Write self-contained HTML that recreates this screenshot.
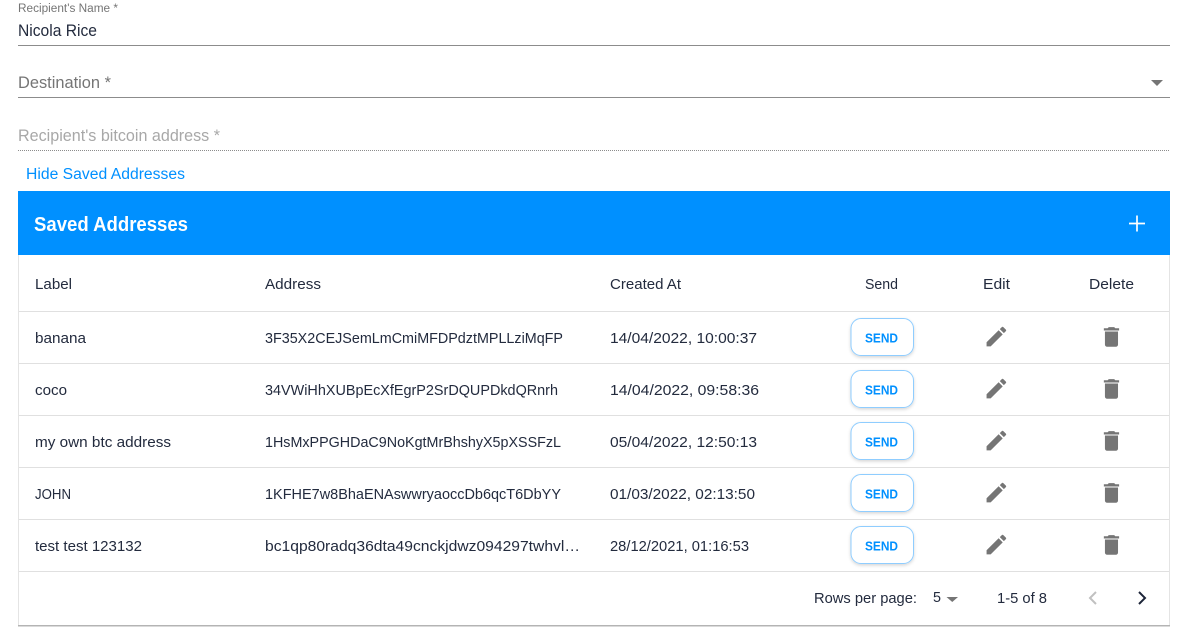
<!DOCTYPE html>
<html><head><meta charset="utf-8"><style>
html,body{margin:0;padding:0;background:#fff;width:1185px;height:643px;overflow:hidden}
svg{display:block}
text{font-family:"Liberation Sans",sans-serif;font-size:14.5px;fill:#232b3e}
</style></head><body>
<svg width="1185" height="643" viewBox="0 0 1185 643" xmlns="http://www.w3.org/2000/svg">
<defs>
<filter id="s" x="-20%" y="-20%" width="140%" height="150%"><feDropShadow dx="0" dy="1.5" stdDeviation="1.5" flood-color="#000" flood-opacity=".16"/></filter>
<g id="row">
<rect x="851" y="318.5" width="62.5" height="37" rx="10" fill="#fff" stroke="#8fcdff" filter="url(#s)"/>
<text x="865" y="342.5" style="font-size:12.5px;fill:#0090ff;font-weight:bold" textLength="33" lengthAdjust="spacingAndGlyphs">SEND</text>
<path transform="translate(983.3 323.5) scale(1.09)" fill="#757575" d="M3 17.25V21h3.75L17.81 9.94l-3.75-3.75L3 17.25zM20.71 7.04c.39-.39.39-1.02 0-1.41l-2.34-2.34a.9959.9959 0 0 0-1.41 0l-1.83 1.83 3.75 3.75 1.83-1.83z"/>
<path transform="translate(1098.4 323.9) scale(1.09)" fill="#757575" d="M6 19c0 1.1.9 2 2 2h8c1.1 0 2-.9 2-2V7H6v12zM19 4h-3.5l-1-1h-5l-1 1H5v2h14V4z"/>
</g>
</defs>
<text x="18" y="12" style="font-size:11.5px;fill:#757575" textLength="100" lengthAdjust="spacingAndGlyphs">Recipient's Name *</text>
<text x="18" y="36" style="font-size:16.5px" textLength="79" lengthAdjust="spacingAndGlyphs">Nicola Rice</text>
<rect x="18" y="45" width="1152" height="1" fill="#8c8c8c"/>
<text x="18" y="88" style="font-size:16.5px;fill:#757575" textLength="93" lengthAdjust="spacingAndGlyphs">Destination *</text>
<rect x="18" y="97" width="1152" height="1" fill="#8c8c8c"/>
<path d="M1151 80h12l-6 6z" fill="#757575"/>
<text x="18" y="141" style="font-size:16.5px;fill:#a8a8a8" textLength="202" lengthAdjust="spacingAndGlyphs">Recipient's bitcoin address *</text>
<line x1="18" y1="150.5" x2="1170" y2="150.5" stroke="#8c8c8c" stroke-dasharray="1 1"/>
<text x="26" y="179" style="font-size:15.5px;fill:#0090ff" textLength="159" lengthAdjust="spacingAndGlyphs">Hide Saved Addresses</text>

<rect x="18" y="255" width="1152" height="371" fill="#e4e4e4"/>
<rect x="18" y="625" width="1152" height="1.5" fill="#b4b4b4"/>
<rect x="19" y="255" width="1150" height="370" fill="#fff"/>
<rect x="18" y="191" width="1152" height="64" fill="#0090ff"/>
<text x="34" y="231" style="font-size:20px;fill:#fff;font-weight:bold" textLength="154" lengthAdjust="spacingAndGlyphs">Saved Addresses</text>
<path d="M1129 223.5h16M1137 215.5v16" stroke="#fff" stroke-width="1.7" fill="none"/>

<text x="35" y="289" textLength="37" lengthAdjust="spacingAndGlyphs">Label</text>
<text x="265" y="289" textLength="56" lengthAdjust="spacingAndGlyphs">Address</text>
<text x="610" y="289" textLength="71" lengthAdjust="spacingAndGlyphs">Created At</text>
<text x="865" y="289" textLength="33" lengthAdjust="spacingAndGlyphs">Send</text>
<text x="983" y="289" textLength="27" lengthAdjust="spacingAndGlyphs">Edit</text>
<text x="1089" y="289" textLength="45" lengthAdjust="spacingAndGlyphs">Delete</text>

<g fill="#e0e0e0">
<rect x="19" y="311" width="1150" height="1"/>
<rect x="19" y="363" width="1150" height="1"/>
<rect x="19" y="415" width="1150" height="1"/>
<rect x="19" y="467" width="1150" height="1"/>
<rect x="19" y="519" width="1150" height="1"/>
<rect x="19" y="571" width="1150" height="1"/>
</g>

<text x="35" y="343" textLength="51" lengthAdjust="spacingAndGlyphs">banana</text>
<text x="265" y="343" textLength="298" lengthAdjust="spacingAndGlyphs">3F35X2CEJSemLmCmiMFDPdztMPLLziMqFP</text>
<text x="610" y="343" textLength="147" lengthAdjust="spacingAndGlyphs">14/04/2022, 10:00:37</text>
<use href="#row"/>

<text x="35" y="395" textLength="32" lengthAdjust="spacingAndGlyphs">coco</text>
<text x="265" y="395" textLength="293" lengthAdjust="spacingAndGlyphs">34VWiHhXUBpEcXfEgrP2SrDQUPDkdQRnrh</text>
<text x="610" y="395" textLength="149" lengthAdjust="spacingAndGlyphs">14/04/2022, 09:58:36</text>
<use href="#row" y="52"/>

<text x="35" y="447" textLength="136" lengthAdjust="spacingAndGlyphs">my own btc address</text>
<text x="265" y="447" textLength="296" lengthAdjust="spacingAndGlyphs">1HsMxPPGHDaC9NoKgtMrBhshyX5pXSSFzL</text>
<text x="610" y="447" textLength="147" lengthAdjust="spacingAndGlyphs">05/04/2022, 12:50:13</text>
<use href="#row" y="104"/>

<text x="35" y="499" textLength="36" lengthAdjust="spacingAndGlyphs">JOHN</text>
<text x="265" y="499" textLength="296" lengthAdjust="spacingAndGlyphs">1KFHE7w8BhaENAswwryaoccDb6qcT6DbYY</text>
<text x="610" y="499" textLength="145" lengthAdjust="spacingAndGlyphs">01/03/2022, 02:13:50</text>
<use href="#row" y="156"/>

<text x="35" y="551" textLength="107" lengthAdjust="spacingAndGlyphs">test test 123132</text>
<text x="265" y="551" textLength="315" lengthAdjust="spacingAndGlyphs">bc1qp80radq36dta49cnckjdwz094297twhvl…</text>
<text x="610" y="551" textLength="139" lengthAdjust="spacingAndGlyphs">28/12/2021, 01:16:53</text>
<use href="#row" y="208"/>

<text x="814" y="603" textLength="103" lengthAdjust="spacingAndGlyphs">Rows per page:</text>
<text x="933" y="602" textLength="8" lengthAdjust="spacingAndGlyphs">5</text>
<path d="M946.5 597h11.5l-5.75 5z" fill="#757575"/>
<text x="997" y="603" textLength="50" lengthAdjust="spacingAndGlyphs">1-5 of 8</text>
<path d="M1096 592l-6 6 6 6" fill="none" stroke="#c0c0c0" stroke-width="2"/>
<path d="M1139 592l6 6-6 6" fill="none" stroke="#1c2438" stroke-width="2"/>
</svg>
</body></html>
